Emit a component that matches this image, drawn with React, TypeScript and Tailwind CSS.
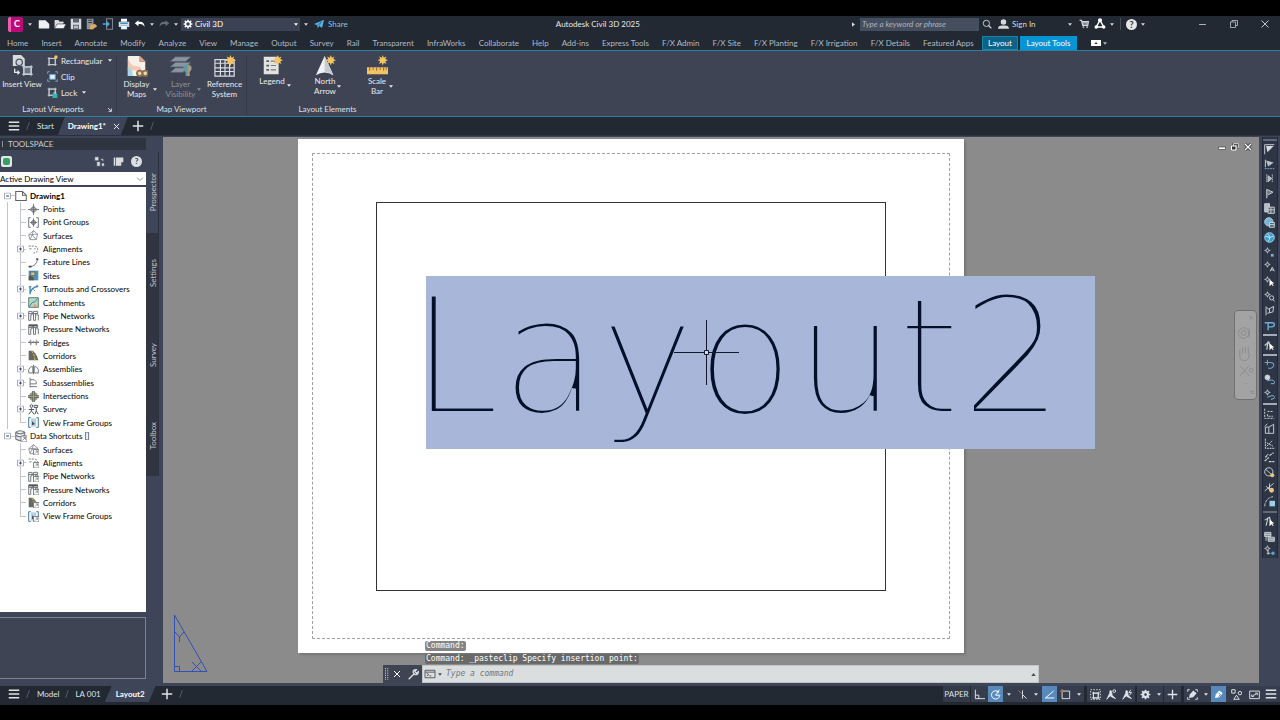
import type { ReactNode } from "react";

type IconProps = { children: ReactNode; className?: string; box?: string };

function Icon({ children, className = "size-3", box = "0 0 16 16" }: IconProps) {
  return (
    <svg viewBox={box} className={`shrink-0 ${className}`} fill="none" stroke="currentColor" strokeWidth="1.4" aria-hidden="true">
      {children}
    </svg>
  );
}

function Caret({ className = "w-2" }: { className?: string }) {
  return (
    <span className={`flex shrink-0 justify-center ${className}`} aria-hidden="true">
      <svg viewBox="0 0 6 4" className="h-[3px] w-1" fill="currentColor"><path d="M0 0h6L3 4z" /></svg>
    </span>
  );
}

function Burger() {
  return <Icon className="size-3"><path d="M1 3h14M1 8h14M1 13h14" strokeWidth="1.8" /></Icon>;
}

function Slash({ className = "ml-1.5" }: { className?: string }) {
  return <Icon box="0 0 6 12" className={`h-3 w-1 text-[#555d69] ${className}`}><path d="M1 12L5 0" /></Icon>;
}

const star = <path d="M18 0l1.2 3 3-1.3-1.3 3L24 6l-3.1 1.2 1.3 3-3-1.3L18 12l-1.2-3.1-3 1.3 1.3-3L12 6l3.1-1.3-1.3-3 3 1.3z" fill="#f5c563" stroke="none" />;

/* ---------- title bar ---------- */

const quickAccess = [
  { label: "New", icon: <path d="M1 3h9l5 5v6H1z" fill="#eef0f2" stroke="none" /> },
  { label: "Open", icon: <><path d="M1 14V3h5l1 2h6v2" fill="#c9ccd0" stroke="none" /><path d="M1 14V3h5l1 2h5v2H4z" fill="#dcdfe2" stroke="none" /><path d="M1 14l3-6h12l-3 6z" fill="#f2f3f4" stroke="#2a313c" strokeWidth=".7" /></> },
  { label: "Save", icon: <><path d="M1 1h14v14H1z" fill="#d7dade" stroke="none" /><path d="M4 1h8v5H4zM4 9h8v6H4z" fill="#59616c" stroke="none" /><path d="M5 11h6M5 13h6" stroke="#fff" strokeWidth="1" /></> },
  { label: "Save As", icon: <><path d="M1 1h9v14H1z" fill="#8d939b" stroke="none" /><path d="M3 3h5M3 6h5" stroke="#343c48" /><path d="M6 9l6-1 3 3-6 4H5z" fill="#e0aa62" stroke="none" /></> },
  { label: "Open from Web", icon: <><path d="M6 1h8v14H6z" stroke="#7d8691" /><path d="M1 8h8M6 5l3 3-3 3" stroke="#4aa9d6" strokeWidth="2" /></> },
  { label: "Plot", icon: <><path d="M4 1h8v4H4z" fill="#fff" stroke="none" /><path d="M1 5h14v7H1z" fill="#d9dde0" stroke="none" /><path d="M3 7h10" stroke="#388fca" strokeWidth="2" /><path d="M4 10h8v5H4z" fill="#fff" stroke="#48a0d4" strokeWidth=".7" /></> },
];

function TitleBar() {
  return (
    <header className="flex h-4 shrink-0 items-center bg-[#222932] text-[#d5d9de]">
      <button aria-label="Application menu" className="ml-2 h-[15px] w-[15px] shrink-0 rounded-xs border-l-[3px] border-[#f05cb0] bg-[#bd0a79] text-[9px] leading-3 font-bold text-white">C</button>
      <Caret className="w-[13px]" />
      {quickAccess.map((q) => (
        <button key={q.label} aria-label={q.label} className="flex w-4 shrink-0 justify-center"><Icon>{q.icon}</Icon></button>
      ))}
      <button aria-label="Undo" className="flex w-4 shrink-0 justify-center text-white"><Icon><path d="M6 3L1 7l5 4V8q6-1 8 4 0-8-8-7z" fill="currentColor" stroke="none" /></Icon></button>
      <Caret />
      <button aria-label="Redo" className="flex w-4 shrink-0 justify-center text-[#656c77]"><Icon><path d="M10 3l5 4-5 4V8Q4 7 2 12q0-8 8-7z" fill="currentColor" stroke="none" /></Icon></button>
      <Caret />
      <label className="relative ml-px flex h-[13px] w-[119px] shrink-0 items-center bg-[#3b4253] text-white">
        <span className="absolute left-0.5">
          <Icon className="size-[10px]"><path d="M8 1v14M1 8h14M3 3l10 10M13 3L3 13" strokeWidth="2.4" /><circle cx="8" cy="8" r="4" fill="#3b4253" strokeWidth="2.4" /></Icon>
        </span>
        <select aria-label="Workspace" className="h-full w-full appearance-none bg-transparent pl-[14px]"><option>Civil 3D</option></select>
        <span className="pointer-events-none absolute right-0"><Caret /></span>
      </label>
      <Caret className="w-3" />
      <button className="ml-0.5 flex shrink-0 items-center gap-1 text-[#7cc5e8]">
        <Icon className="size-[10px]"><path d="M0 8L16 1l-3 13-5-3-2 4-1-5z" fill="#5bb4e3" stroke="none" /><path d="M5 10l7-6-4 7" stroke="#24445c" strokeWidth=".8" /></Icon>
        Share
      </button>
      <h1 className="min-w-0 flex-1 pr-1 text-center text-[#e5e7ea]">Autodesk Civil 3D 2025</h1>
      <span className="flex w-2 shrink-0"><svg viewBox="0 0 4 6" className="h-[5px] w-[3px]" fill="currentColor"><path d="M0 0v6l4-3z" /></svg></span>
      <input aria-label="Search" placeholder="Type a keyword or phrase" className="h-[13px] w-[119px] shrink-0 bg-[#454e5f] px-0.5 italic placeholder:text-[#adb3bc]" />
      <button aria-label="Find" className="flex w-4 shrink-0 justify-center"><Icon className="size-[10px]"><circle cx="7" cy="7" r="5" /><path d="M10.500 10.500L15 15" strokeWidth="2" /></Icon></button>
      <button className="flex w-[71px] shrink-0 items-center gap-[3px] pl-[3px]">
        <Icon className="h-3 w-[11px]"><circle cx="8" cy="5" r="4" fill="currentColor" stroke="none" /><path d="M0 15q0-5 6-5h4q6 0 6 5z" fill="currentColor" stroke="none" /></Icon>
        Sign In
      </button>
      <Caret />
      <button aria-label="Store" className="ml-0.5 flex w-4 shrink-0 justify-center"><Icon className="size-[10px]"><path d="M1 2h3l2 8h8l1-6H5" strokeWidth="2" /><path d="M6 6h8M6 8h8" /><circle cx="7" cy="13" r="1" /><circle cx="13" cy="13" r="1" /></Icon></button>
      <button aria-label="Autodesk apps" className="flex w-4 shrink-0 justify-center text-white"><Icon><path d="M8 3L3 12h10z" strokeWidth="2" /><circle cx="8" cy="3" r="2" fill="currentColor" /><circle cx="3" cy="12" r="1.600" fill="currentColor" /><circle cx="13" cy="12" r="1.600" fill="currentColor" /></Icon></button>
      <Caret />
      <span className="ml-1 h-3 w-px bg-[#49505c]" />
      <button aria-label="Help" className="ml-[5px] size-[11px] shrink-0 rounded-full bg-[#e4e6e8] text-[9px] leading-[11px] font-bold text-[#29303a]">?</button>
      <Caret className="ml-0.5 w-2" />
      <button aria-label="Minimize" className="ml-10 flex w-[31px] shrink-0 justify-center"><Icon className="size-[9px]"><path d="M2 8h12" /></Icon></button>
      <button aria-label="Restore" className="flex w-[31px] shrink-0 justify-center"><Icon className="size-2"><path d="M1 4h10v11H1zM4 4V1h11v10h-4" /></Icon></button>
      <button aria-label="Close" className="flex w-[31px] shrink-0 justify-center"><Icon className="size-2"><path d="M1 1l14 14M15 1L1 15" strokeWidth="1.800" /></Icon></button>
    </header>
  );
}

/* ---------- ribbon ---------- */

const tabs = [
  "Home", "Insert", "Annotate", "Modify", "Analyze", "View", "Manage", "Output", "Survey", "Rail", "Transparent",
  "InfraWorks", "Collaborate", "Help", "Add-ins", "Express Tools", "F/X Admin", "F/X Site", "F/X Planting",
  "F/X Irrigation", "F/X Details", "Featured Apps",
];

function RibbonTabs() {
  return (
    <nav className="flex h-[18px] shrink-0 items-center bg-[#222932] pt-1 pl-[7px] text-[#b3b9c2]">
      <div className="flex w-[967px] shrink justify-between">
        {tabs.map((t) => <button key={t} className="whitespace-nowrap">{t}</button>)}
      </div>
      <button className="ml-2 h-[14px] w-9 shrink-0 border border-[#1784ab] bg-[#0d6286] leading-3 text-white">Layout</button>
      <button className="ml-0.5 h-[14px] w-[57px] shrink-0 bg-[#0794d5] leading-3 whitespace-nowrap text-white">Layout Tools</button>
      <button aria-label="Minimize ribbon" className="ml-[14px] flex h-1.5 w-[10px] items-center justify-center bg-white">
        <svg viewBox="0 0 6 4" className="h-0.5 w-1"><path d="M0 4h6L3 0z" fill="#222932" /></svg>
      </button>
      <Caret />
    </nav>
  );
}

const bigIcons = {
  insert: <><path d="M2 0h9l4 4v8H2z" fill="#d9dcde" stroke="none" /><circle cx="9" cy="8" r="3.500" stroke="#4b5564" fill="#cdd3d8" /><path d="M4 15v4h5M7 17l2 2-2 2" stroke="#e5e7ea" /><path d="M14 13h8v8h-8z" fill="#687589" stroke="#d9dcde" /><path d="M12 13h12M12 21h12M14 11v12M22 11v12" stroke="#c3c9d0" strokeWidth="1" /></>,
  maps: <><path d="M2 1h13l6 6v16H2z" fill="#f4f1ea" stroke="none" /><path d="M2 4q4 9 10 8 6 1 5 5H2z" fill="#f4c9b4" stroke="none" /><path d="M2 13q4 0 6 10H2z" fill="#a8d4e4" stroke="none" /><path d="M15 1v6h6" fill="#e4a98f" stroke="#bb6a5a" strokeWidth=".7" /><circle cx="15" cy="20" r="3" stroke="#8f6d48" strokeWidth="2" fill="#eed8a9" /><circle cx="21" cy="20" r="3" stroke="#8f6d48" strokeWidth="2" fill="#eed8a9" /></>,
  layers: <><path d="M6 2h17l-6 5H0zM6 8h17l-6 5H0zM6 14h14l-6 5H0z" fill="#8b95a0" stroke="#505a68" strokeWidth=".7" /><path d="M15 12q5-4 8 0 2 4-2 7v4h-4v-4q-4-3-2-7z" fill="#5f98a6" stroke="none" /><path d="M19 11v12q4 1 2-4 4-4 1-7z" fill="#aa9a75" stroke="none" /></>,
  grid: <path d="M1 5h21v18H1zM1 9h21M1 14h21M1 18h21M7 5v18M12 5v18M17 5v18" stroke="#d9dde2" strokeWidth="1.300" />,
  legend: <><path d="M2 2h17v20H2z" fill="#e3e3df" stroke="none" /><path d="M5 7h3M5 12h3M5 17h3" stroke="#555e68" strokeWidth="2" /><path d="M10 7h6M10 12h6M10 17h6" stroke="#747b83" /></>,
  north: <><path d="M11 1L1 23q10-6 20 0z" fill="#f1f2f3" stroke="none" /><path d="M11 1v18q6 1 10 4z" fill="#c4cbd2" stroke="none" /></>,
  scale: <><path d="M0 14h24v8H0z" fill="#f4c464" stroke="none" /><path d="M3 14v4M7 14v3M11 14v4M15 14v3M19 14v4M22 14v3" stroke="#795f34" strokeWidth="1" /></>,
};

type ToolProps = { icon: keyof typeof bigIcons; lines: string[]; width: string; starred?: boolean; caret?: boolean; dim?: boolean; tight?: boolean };

function Tool({ icon, lines, width, starred, caret, dim, tight }: ToolProps) {
  return (
    <button className={`relative flex flex-col items-center leading-[10px] ${width} ${dim ? "text-[#8b919c]" : "text-[#e8eaed]"}`}>
      <Icon box="0 0 24 24" className={tight ? "size-[21px]" : "mb-0.5 size-[22px]"}>{bigIcons[icon]}{starred && star}</Icon>
      {lines.map((l) => <span key={l} className="whitespace-nowrap">{l}</span>)}
      {caret && <span className={`absolute -right-px ${lines.length > 1 ? "bottom-2" : "-bottom-px"}`}><Caret className="w-[5px]" /></span>}
    </button>
  );
}

const viewportTools = [
  { label: "Rectangular", caret: true, icon: <><path d="M3 5h9v9H3zM1 5h13M1 14h13M3 3v13M12 3v13" stroke="#c5cbd2" /><circle cx="13" cy="3" r="2.500" fill="#f5c563" stroke="none" /></> },
  { label: "Clip", caret: false, icon: <><path d="M4 5h8v7H4z" fill="#e8edf2" stroke="#5da3d3" /><path d="M1 4V1h3M12 1h3v3M15 12v3h-3M4 15H1v-3" stroke="#74a8cc" /></> },
  { label: "Lock", caret: true, icon: <><path d="M3 3h9v9H3zM1 3h13M1 12h13M3 1v13M12 1v13" stroke="#c5cbd2" /><path d="M8 10h7v6H8z" fill="#37b4b0" stroke="none" /><path d="M10 10V8h3v2" stroke="#9cdbd8" /></> },
];

function Panel({ title, width, children, launcher }: { title: string; width: string; children: ReactNode; launcher?: boolean }) {
  return (
    <section className={`relative flex shrink-0 flex-col ${width}`}>
      <div className="flex flex-1 items-start">{children}</div>
      <h2 className={`h-3 text-center leading-3 text-[#dde0e4] ${launcher ? "pr-[10px]" : ""}`}>{title}</h2>
      {launcher && <button aria-label="Viewport settings" className="absolute right-1 bottom-[3px]"><Icon className="size-[5px] text-[#dde0e4]"><path d="M3 3l10 10M5 14h9V5" strokeWidth="3" /></Icon></button>}
    </section>
  );
}

function Ribbon() {
  return (
    <div className="flex h-[67px] shrink-0 border-y border-[#2b7f9f] bg-[#3e4454] pt-1 pb-px">
      <Panel title="Layout Viewports" width="w-[117px] border-r border-[#333a48]" launcher>
        <Tool icon="insert" lines={["Insert View"]} width="w-11" />
        <ul className="ml-[3px] text-[#e8eaed]">
          {viewportTools.map((t) => (
            <li key={t.label}>
              <button className="flex h-4 items-start gap-0.5"><Icon className="mr-px size-[11px]">{t.icon}</Icon>{t.label}{t.caret && <span className="mt-1"><Caret className="ml-0.5 w-1.5" /></span>}</button>
            </li>
          ))}
        </ul>
      </Panel>
      <Panel title="Map Viewport" width="w-[130px] border-r border-[#333a48]">
        <Tool icon="maps" lines={["Display", "Maps"]} width="w-[39px]" caret />
        <Tool icon="layers" lines={["Layer", "Visibility"]} width="ml-[5px] w-[39px]" caret dim />
        <Tool icon="grid" lines={["Reference", "System"]} width="ml-[5px] w-[39px]" starred />
      </Panel>
      <Panel title="Layout Elements" width="w-[161px]">
        <Tool icon="legend" lines={["Legend"]} width="ml-[7px] w-[36px]" starred caret tight />
        <Tool icon="north" lines={["North", "Arrow"]} width="ml-5 w-[30px]" starred caret tight />
        <Tool icon="scale" lines={["Scale", "Bar"]} width="ml-[22px] w-[30px]" starred caret tight />
      </Panel>
    </div>
  );
}

function DocumentTabs() {
  return (
    <nav className="flex h-[18px] shrink-0 items-center bg-[#222932] pl-2 text-[#dfe2e6]">
      <button aria-label="File tabs"><Burger /></button>
      <Slash />
      <button className="ml-[7px]">Start</button>
      <div className="ml-1 flex h-full w-[70px] items-center justify-between bg-[#3e4558] pr-2 pl-[10px] font-bold text-white [clip-path:polygon(7px_0,100%_0,calc(100%-7px)_100%,0_100%)]">
        <button>Drawing1*</button>
        <button aria-label="Close tab"><Icon className="size-[7px]"><path d="M2 2l12 12M14 2L2 14" strokeWidth="2" /></Icon></button>
      </div>
      <button aria-label="New drawing" className="ml-1"><Icon className="size-[12px]"><path d="M8 1v14M1 8h14" strokeWidth="2" /></Icon></button>
      <Slash className="ml-1.5" />
    </nav>
  );
}

/* ---------- toolspace ---------- */

const g = "#70757b";
const pipe = <path d="M1 2h5v5H4v8H1zM8 2h6v3h-3v10H8zM12 7h3v8M1 5h13" stroke={g} />;
const treeIcons: Record<string, ReactNode> = {
  Points: <><path d="M8 3l5 5-5 5-5-5z" fill="#a3a7ab" stroke={g} /><path d="M8 0v16M0 8h16" stroke={g} /></>,
  "Point Groups": <><path d="M8 4l4 4-4 4-4-4z" fill="#a3a7ab" stroke={g} /><path d="M8 2v12M3 8h10M4 1H1v14h3M12 1h3v14h-3" stroke={g} /></>,
  Surfaces: <path d="M8 1l6 5-2 8H3L1 7zM8 1L6 7l6 7M1 7l13-1M3 14l3-7" stroke={g} strokeWidth="1" />,
  Alignments: <path d="M1 3h7q6 0 6 5t-6 5M2 7h3M9 7h2" stroke={g} strokeDasharray="3 1.500" />,
  "Feature Lines": <><path d="M2 14q10 0 12-11" stroke={g} /><path d="M1 14h4M12 3h3" stroke="#41464c" strokeWidth="2.500" /></>,
  Sites: <><path d="M1 1h14v14H1z" fill="#4f90b3" stroke="none" /><path d="M1 9q7-1 8 6H1z" fill="#5d5648" stroke="none" /><path d="M4 3h6v5H4z" fill="#d6c58f" stroke="#4a4f55" strokeWidth=".8" /></>,
  "Turnouts and Crossovers": <><path d="M3 15V3M3 14q1-9 12-11" stroke="#3484b8" strokeWidth="1.800" /><path d="M1 4h4M8 8l2 2M13 1v4" stroke={g} /></>,
  Catchments: <><path d="M1 1h14v14H1z" fill="#b8d9c3" stroke="#5c7a73" /><path d="M2 14l4-6 4-1 4-5" stroke="#2e82ae" /><path d="M9 9l5 5H8z" fill="#db9e76" stroke="none" /></>,
  "Pipe Networks": pipe,
  "Pressure Networks": <>{pipe}<path d="M1 2h13" stroke="#50555b" strokeWidth="3" /></>,
  Bridges: <path d="M0 8h16M4 4v8M12 4v8M1 6q4 5 7 0 4 5 7 0" stroke={g} />,
  Corridors: <><path d="M1 1h6q6 5 8 14H1z" fill="#656960" stroke="none" /><path d="M5 1q5 6 5 14" stroke="#dfca4f" strokeDasharray="4 1.500" /></>,
  Assemblies: <path d="M8 1v14M1 8l3-4h3v9H1zM15 8l-3-4H9v9h6z" stroke={g} />,
  Subassemblies: <path d="M3 1v14M3 4h6l3 3v3H3M3 14h10" stroke={g} />,
  Intersections: <><circle cx="8" cy="8" r="6.500" fill="#949889" stroke="none" /><path d="M8 0v16M0 8h16" stroke="#6b6f62" strokeWidth="4" /><path d="M8 0v16M0 8h16" stroke="#b5b293" strokeWidth="1" /></>,
  Survey: <><circle cx="5" cy="3" r="2" stroke="#4b5056" /><path d="M5 6v4l-4 5M5 10l4 5M1 8h8M12 5v5l-2 5M12 10l3 5M9 2h5v3H9z" stroke="#4b5056" /></>,
  "View Frame Groups": <><path d="M4 1H1v14h3M12 1h3v14h-3" stroke="#3d7098" /><path d="M4 2h8v12H4z" fill="#b7cfe2" stroke="none" /><path d="M6 6l4 4-4 2z" fill="#34424f" stroke="none" /></>,
};

type Node = { label: string; root?: boolean; plus?: boolean; shortcut?: boolean; last?: boolean };

const nodes: Node[] = [
  { label: "Drawing1", root: true },
  { label: "Points" },
  { label: "Point Groups" },
  { label: "Surfaces" },
  { label: "Alignments", plus: true },
  { label: "Feature Lines" },
  { label: "Sites" },
  { label: "Turnouts and Crossovers", plus: true },
  { label: "Catchments" },
  { label: "Pipe Networks", plus: true },
  { label: "Pressure Networks" },
  { label: "Bridges" },
  { label: "Corridors" },
  { label: "Assemblies", plus: true },
  { label: "Subassemblies", plus: true },
  { label: "Intersections" },
  { label: "Survey", plus: true },
  { label: "View Frame Groups", last: true },
  { label: "Data Shortcuts []", root: true, shortcut: true },
  { label: "Surfaces", shortcut: true },
  { label: "Alignments", shortcut: true, plus: true },
  { label: "Pipe Networks", shortcut: true },
  { label: "Pressure Networks", shortcut: true },
  { label: "Corridors", shortcut: true },
  { label: "View Frame Groups", shortcut: true, last: true },
];

const linkBadge = <><path d="M8 8h8v8H8z" fill="#fff" stroke="#6d7278" strokeWidth="1.200" /><path d="M10 14l4-4M11 10h3v3" stroke="#6d7278" strokeWidth="1" /></>;

function Expander({ open }: { open?: boolean }) {
  return (
    <button aria-label={open ? "Collapse" : "Expand"} className="absolute top-1/2 -left-[3px] size-[7px] -translate-y-1/2 bg-white text-[#a4a9b5]">
      <svg viewBox="0 0 7 7" className="block size-[7px]" fill="none" stroke="currentColor"><path d="M.5.5h6v6h-6z" /><path d="M2 3.500h3" stroke="#3f4a78" />{!open && <path d="M3.500 2v3" stroke="#3f4a78" />}</svg>
    </button>
  );
}

function TreeRow({ node }: { node: Node }) {
  if (node.root) {
    return (
      <li className="flex flex-1 items-center">
        <span className="relative ml-[7px] flex w-2 items-center self-stretch"><span className="h-px w-full bg-[#c3c5ca]" /><Expander open /></span>
        {node.shortcut
          ? <Icon><path d="M1 3q6-4 12 0v9q-6 4-12 0zM1 3q6 4 12 0M1 7q6 4 12 0" stroke={g} fill="#e7e8e9" />{linkBadge}</Icon>
          : <Icon><path d="M1 2h9l5 5v7H1zM10 2v5h5" stroke="#5c6167" fill="#fff" /></Icon>}
        <span className={`ml-[3px] ${node.shortcut ? "" : "font-bold"}`}>{node.label}</span>
      </li>
    );
  }
  return (
    <li className="flex flex-1 items-center">
      <span className={`ml-[7px] w-[13px] self-stretch border-l ${node.shortcut ? "border-transparent" : "border-[#c3c5ca]"}`} />
      <span className="relative flex w-2 items-center self-stretch">
        <span className={`absolute top-0 left-0 w-px bg-[#c3c5ca] ${node.last ? "h-1/2" : "h-full"}`} />
        <span className="h-px w-[6px] bg-[#c3c5ca]" />
        {node.plus && <Expander />}
      </span>
      <Icon className="size-[11px]">{treeIcons[node.label]}{node.shortcut && linkBadge}</Icon>
      <span className="ml-1 whitespace-nowrap">{node.label}</span>
    </li>
  );
}

const sideTabs = [
  { label: "Prospector", tone: "bg-[#3e4558]" },
  { label: "Settings", tone: "bg-[#303541]" },
  { label: "Survey", tone: "bg-[#303541]" },
  { label: "Toolbox", tone: "bg-[#303541]" },
];

function Toolspace() {
  return (
    <aside className="flex w-[163px] shrink-0 bg-[#3e4558] pt-0.5">
      <div className="flex w-[146px] flex-col">
        <h2 className="flex h-3 items-center bg-[#2e3440] pl-0.5 text-[#c9cdd3]"><span className="mr-[5px] h-1.5 w-px bg-[#8e949e]" />TOOLSPACE</h2>
        <div className="flex h-[22px] items-center text-[#d8dbdf]">
          <button aria-label="Item view" className="mr-auto ml-px flex size-[11px] items-center justify-center rounded-xs bg-[#dfe9e2]"><span className="size-[7px] rounded-xs bg-[#35a168]" /></button>
          <button aria-label="Panorama"><Icon className="size-[11px]"><path d="M1 1h6v6H1zM9 4h5v4M4 8h5v7H4zM11 10h4v5h-4z" fill="currentColor" strokeWidth="1" stroke="#3e4558" /></Icon></button>
          <button aria-label="Preview" className="ml-2"><Icon className="size-[11px]"><path d="M1 2h2v12H1zM4 2h11v7h-3v5H4z" fill="currentColor" stroke="none" /></Icon></button>
          <button aria-label="Toolspace help" className="mr-1 ml-[7px] size-[11px] rounded-full bg-[#dcdfe2] text-[8px] leading-[11px] font-bold text-[#353b48]">?</button>
        </div>
        <label className="relative flex h-[13px] items-center bg-white text-black">
          <select aria-label="Drawing view" className="h-full w-full appearance-none"><option>Active Drawing View</option></select>
          <span className="pointer-events-none absolute right-0.5"><Icon className="size-2 text-[#5d6370]"><path d="M2 5l6 6 6-6" /></Icon></span>
        </label>
        <div className="mt-0.5 flex-1 bg-white pt-0.5 text-black">
          <ul className="flex h-[334px] flex-col">
            {nodes.map((n, i) => <TreeRow key={i} node={n} />)}
          </ul>
        </div>
        <div className="mt-[5px] mb-[7px] h-[62px] border border-l-0 border-[#7b818e] bg-[#3e4454]" />
      </div>
      <div className="flex w-[13px] flex-col pt-[14px]">
        {sideTabs.map((t) => (
          <button key={t.label} className={`flex h-[81px] w-full items-center justify-center border-r border-[#2c323d] pl-0.5 text-[#bfc4cc] ${t.tone}`}>
            <span className="rotate-180 [writing-mode:vertical-rl]">{t.label}</span>
          </button>
        ))}
      </div>
    </aside>
  );
}

/* ---------- drawing area ---------- */

function CommandLine() {
  return (
    <div className="absolute bottom-0 left-[220px] w-[656px] font-['DejaVu_Sans_Mono',monospace] text-[8px]">
      <div className="flex flex-col items-start gap-[3px] pb-px pl-[42px] leading-[10px] text-white">
        <span className="rounded-xs bg-[#858585] px-px">Command:</span>
        <span className="rounded-xs bg-[#696969] px-px">Command: _pasteclip Specify insertion point:</span>
      </div>
      <div className="flex h-[18px] items-center bg-[#3f4453]">
        <Icon box="0 0 8 16" className="ml-px h-3 w-1.5 text-[#b6bbc3]"><path d="M2 0v16M5 0v16" strokeDasharray="1.500 1.500" /></Icon>
        <button aria-label="Close command line" className="flex w-[14px] justify-center text-white"><Icon className="size-2"><path d="M2 2l12 12M14 2L2 14" strokeWidth="2" /></Icon></button>
        <button aria-label="Customize" className="flex w-[18px] justify-center text-[#d5d8dd]"><Icon className="size-[11px]"><path d="M1 15l8-8M15 4l-3 2-2-2 2-3q-6 0-4 5l2 2q5 1 5-4z" strokeWidth="2" /></Icon></button>
        <label className="flex h-full flex-1 items-center border border-[#c3c6c8] bg-[#dbdedf] pl-px text-[#4a4f55]">
          <Icon className="h-[10px] w-3"><path d="M0 2h16v12H0zM0 5h16M3 7l3 2-3 2M7 11h3" /></Icon>
          <Caret />
          <input aria-label="Command" placeholder="Type a command" className="min-w-0 flex-1 bg-transparent pl-0.5 italic placeholder:text-[#73787d]" />
          <button aria-label="Command history" className="mr-0.5"><svg viewBox="0 0 6 4" className="h-[3px] w-[5px]" fill="currentColor"><path d="M0 4h6L3 0z" /></svg></button>
        </label>
      </div>
    </div>
  );
}

function Canvas() {
  return (
    <main className="relative mt-px mb-[3px] min-w-0 flex-1 overflow-hidden bg-[#8b8b8b]">
      {/* sheet with its printable margin and one viewport */}
      <div className="absolute top-0.5 left-[135px] h-[514px] w-[666px] bg-white shadow-[2px_2px_2px_#777]">
        <div className="absolute top-[14px] left-[14px] h-[486px] w-[638px] border border-dashed border-[#a0a0a0]" />
        <div className="absolute top-[63px] left-[78px] h-[389px] w-[510px] border border-[#333]" />
      </div>

      {/* selected text, its strokes thinned by an outline in the highlight colour */}
      <div className="absolute top-[139px] left-[263px] flex h-[173px] w-[669px] items-center bg-[#a7b6d9] text-[#04102a]">
        <span className="-mt-3 -ml-4 font-['DejaVu_Sans',sans-serif] text-[162px] leading-none font-extralight [-webkit-text-stroke:4px_#a7b6d9]">Layout2</span>
      </div>

      {/* crosshair */}
      <svg viewBox="0 0 66 66" className="absolute top-[183px] left-[511px] size-[66px]" fill="none" stroke="#14192c">
        <path d="M32.500 0v30M32.500 35v30M0 32.500h30M35 32.500h30" /><path d="M30.500 30.500h4v4h-4z" fill="#d5dcee" />
      </svg>

      {/* UCS triangle */}
      <svg viewBox="0 0 36 60" className="absolute bottom-[10px] left-[10px] h-[60px] w-9" fill="none" stroke="#3550b4">
        <path d="M1.500 2v56.500H34zM1.500 53.500h5v5M2 19l4.500 5L11 19M6.500 24v5M19 49l9 9M28 49l-9 9" />
      </svg>

      <div className="absolute top-1.5 right-[7px] flex items-center gap-[5px] text-white">
        <button aria-label="Minimize drawing"><Icon className="size-[8px]"><path d="M1 8h14v5H1z" fill="#fff" stroke="#444" /></Icon></button>
        <button aria-label="Restore drawing"><Icon className="size-[8px]"><path d="M5 1h10v9H5z" stroke="#333" strokeWidth="4" /><path d="M5 1h10v9H5z" /><path d="M1 6h9v8H1z" fill="#333" strokeWidth="2" /></Icon></button>
        <button aria-label="Close drawing"><Icon className="size-[8px]"><path d="M2 2l12 12M14 2L2 14" stroke="#333" strokeWidth="6" /><path d="M2 2l12 12M14 2L2 14" strokeWidth="2.500" /></Icon></button>
      </div>

      {/* navigation bar */}
      <div className="absolute top-[173px] right-[2px] h-[90px] w-[23px] rounded-sm border border-[#6f6f6f] bg-[#a3a3a3] text-[#8c8c8c]">
        <svg viewBox="0 0 22 88" className="size-full" fill="none" stroke="currentColor">
          <path d="M15 3l4 4M19 3l-4 4M16 84h4M16 82h4" /><circle cx="9" cy="21" r="5.500" /><circle cx="9" cy="21" r="2.500" /><path d="M15 16v10M5 44q0 6 5 6t5-8M5 44v-6M8 42v-6M11 42v-6M14 42v-6M5 55l10 11M15 55L5 66" /><circle cx="17" cy="60" r="2" /><path d="M11 74h2" />
        </svg>
      </div>

      <CommandLine />
    </main>
  );
}

/* ---------- right tool strip ---------- */

const node = <path d="M5 1l1 3 3 1-3 1-1 3-1-3-3-1 3-1z" strokeWidth="1.200" />;
const cursor = <path d="M8 5v10l3-3 2 3 1-1-2-3h3z" fill="#fff" stroke="none" />;
const stripGroups: ReactNode[][] = [
  [
    <><path d="M1 15V1h14" /><path d="M3 3h11L5 12z" fill="#d5dade" stroke="none" /></>,
    <><path d="M2 1v11" /><path d="M3 2l11 3-8 6z" fill="#b9c1c8" stroke="none" /><path d="M1 14h14" stroke="#69a9cf" strokeDasharray="3 1" /></>,
    <><path d="M4 2v12M12 2v12" strokeDasharray="2 1" /><path d="M6 4l5 4-5 5z" fill="#aab6c0" /></>,
    <path d="M4 15V2l9 4-7 4" fill="#6c7885" />,
    <><path d="M1 1h7v12H1z" fill="#b6bdc4" /><path d="M6 6h9v9H6zM6 10h9M10 6v9" fill="#4a5563" /></>,
    <><circle cx="7" cy="7" r="6" fill="#72b6dc" /><path d="M8 8h7v7H8zM8 11h7" fill="#49677f" /></>,
    <><circle cx="8" cy="8" r="7" fill="#3e9ccd" stroke="#9bd0ea" /><path d="M2 6q6 4 12 0M5 2q6 6 1 12" stroke="#c8e6f4" /></>,
    <>{node}<path d="M10 10h4v4h-4z" fill="#78afd3" stroke="none" /></>,
    <>{node}<path d="M9 15l3-6 3 6M10 13h4" /></>,
    <>{node}{cursor}</>,
    <>{node}<circle cx="11" cy="10" r="3" /><path d="M13 12l2 3" /></>,
    <path d="M3 2v13M4 4l3 2 7-4-1 8-8 2M8 5v6" />,
    <path d="M1 4h11q3 0 3 3t-4 3H6M6 4v11" stroke="#6eaed4" strokeWidth="2" />,
  ],
  [<><path d="M1 8l6-5 3 8M6 2l-2 12" strokeWidth="1.800" />{cursor}</>],
  [
    <path d="M1 5h7M5 1v8M8 5q7 0 6 5-2 5-8 3" stroke="#739fca" strokeWidth="1.600" />,
    <><circle cx="5" cy="5" r="3.500" fill="#ced3d8" /><path d="M5 10q8-3 10 1t-5 3" stroke="#86b8d7" /></>,
    <>{node}<path d="M5 12q8-4 10-1t-5 4" stroke="#86b8d7" /></>,
  ],
  [
    <path d="M1 1v14h14M5 5h8M5 9v3h8" strokeDasharray="3 1.500" />,
    <path d="M2 6v9h5V6zM7 6l7-4v13H7M1 5l4-4" />,
    <path d="M2 1v14h13M4 12l8-8M4 7l9 5" strokeDasharray="3 1" />,
    <path d="M1 13l6-5M8 5l6-4M7 14h8M2 8l4-5" strokeDasharray="4 1" strokeWidth="1.800" />,
    <><circle cx="7" cy="7" r="6" /><path d="M2 3l9 8" /><circle cx="12" cy="12" r="3" fill="#e5c87d" stroke="none" /></>,
    <><path d="M1 13L14 2M3 6l8 8M8 2v9" /><circle cx="11" cy="12" r="3.500" fill="#e5c87d" stroke="none" /></>,
    <><path d="M1 15Q2 3 13 1" strokeDasharray="4 1.500" /><path d="M8 7h8v8H8z" fill="#9ad0e9" stroke="none" /></>,
  ],
  [
    <><path d="M1 6l7-4 3 9M6 2l-3 12" strokeWidth="1.600" />{cursor}</>,
    <path d="M1 2h9v6H1zM1 5h9M6 9h9v6H6zM3 8v6M6 12h9" fill="#87919b" />,
    <>{node}<path d="M6 7v7M4 12h5" /><circle cx="13" cy="12" r="2.500" fill="#57a5d8" stroke="none" /></>,
  ],
];

function ToolStrip() {
  return (
    <aside className="flex w-[21px] shrink-0 justify-center bg-[#3e4558] pt-px">
      <div className="flex h-[421px] w-4 flex-col border-x border-[#222935] bg-[#2e3645] text-[#c8cfd6]">
        {stripGroups.map((group, gi) => (
          <div key={gi} className="contents">
            <span className="flex h-[5px] shrink-0 items-center"><span className={`h-0.5 w-full ${gi === 0 || gi === 4 ? "bg-[#606b79]" : "bg-[#a3adb7]"}`} /></span>
            {group.map((icon, i) => (
              <button key={i} aria-label={`Tool ${gi + 1}-${i + 1}`} className="flex min-h-0 flex-1 items-center justify-center"><Icon className="size-[11px]">{icon}</Icon></button>
            ))}
          </div>
        ))}
      </div>
    </aside>
  );
}

/* ---------- status bar ---------- */

const person = <path d="M6 2l2 1 1 6 5 5-5-2-3-2-5 5 4-8z" fill="currentColor" stroke="currentColor" strokeWidth="1" />;
const pen = <path d="M3 13l1-5 5-6 5 4-5 6z" fill="currentColor" stroke="none" />;
const statusItems: { label: string; width: string; icon: ReactNode; caret?: string; on?: boolean }[] = [
  { label: "Ortho", width: "ml-px w-[17px]", icon: <path d="M2 1v13h14M2 9h5v5" /> },
  { label: "Polar", width: "w-[15px]", on: true, caret: "w-3", icon: <><path d="M13 5a6 6 0 1 0 1 5M8 9h7M8 9l5-6" /><path d="M10 5l4-4" /></> },
  { label: "Isometric", width: "w-[14px]", caret: "w-[13px]", icon: <><path d="M8 2v12M8 8l6 6" /><path d="M2 2l6 6" stroke="#bd6670" /></> },
  { label: "Object snap tracking", width: "w-[15px]", on: true, icon: <path d="M14 3L2 13h13" /> },
  { label: "Object snap", width: "w-[17px]", caret: "w-[10px]", icon: <><path d="M4 3h10v11H3V5" /><circle cx="3" cy="3" r="1.800" stroke="#df8a68" /></> },
  { label: "Viewport lock", width: "ml-[3px] w-4", icon: <><path d="M1 1h14v14H1z" strokeDasharray="2 2" /><path d="M5 6h7v7H5zM3 6h11M3 13h11M5 4v11M12 4v11" /></> },
  { label: "Annotation visibility", width: "w-4", icon: <>{person}<circle cx="12" cy="3" r="2" /></> },
  { label: "Add scales", width: "w-4", icon: <>{person}<path d="M13 1l-3 4h4l-3 4" /></> },
  { label: "Workspace switching", width: "ml-0.5 w-[17px]", caret: "w-[9px]", icon: <><path d="M8 1v14M1 8h14M3 3l10 10M13 3L3 13" strokeWidth="2.500" /><circle cx="8" cy="8" r="3.500" fill="#3a4150" strokeWidth="3" /></> },
  { label: "Annotation monitor", width: "ml-px w-[17px]", icon: <path d="M8 1v14M1 8h14" strokeWidth="2" /> },
  { label: "Isolate objects", width: "ml-[3px] w-[17px]", caret: "w-[10px]", icon: <><path d="M1 4V1h3M12 1h3v3M15 12v3h-3M4 15H1v-3" />{pen}</> },
  { label: "Hardware acceleration", width: "w-[15px]", on: true, icon: <>{pen}<path d="M8 6l3 2-3 3" stroke="#5889bd" /></> },
  { label: "Quick properties", width: "w-5", icon: <><path d="M1 1h5v5H1zM8 9l4 6H4z" /><circle cx="13" cy="6" r="2.500" /></> },
  { label: "Clean screen", width: "w-4", icon: <path d="M1 3h14v11H1zM4 8v3h3M12 9V6H9M5 10l6-3" /> },
];

function StatusBar() {
  return (
    <footer className="flex h-[19px] shrink-0 items-center bg-[#222932] pb-[3px] pl-2 text-[#dfe2e6]">
      <button aria-label="Layout list"><Burger /></button>
      <Slash />
      <button className="ml-[7px]">Model</button>
      <Slash />
      <button className="ml-1.5">LA 001</button>
      <button className="ml-1 h-full w-[51px] bg-[#3e4558] font-bold text-white [clip-path:polygon(7px_0,100%_0,calc(100%-7px)_100%,0_100%)]">Layout2</button>
      <button aria-label="New layout" className="ml-[5px]"><Icon className="size-[12px]"><path d="M8 1v14M1 8h14" strokeWidth="2" /></Icon></button>
      <Slash />
      <button className="ml-auto h-4 w-[27px] bg-[#323947] whitespace-nowrap">PAPER</button>
      {statusItems.map((s) => (
        <div key={s.label} className="flex h-4 shrink-0 items-center">
          <button aria-label={s.label} className={`flex h-full items-center justify-center ${s.width} ${s.on ? "bg-[#5889bd] text-white" : "bg-[#363d4c]"}`}>
            <Icon className="size-[11px]">{s.icon}</Icon>
          </button>
          {s.caret && <span className="flex h-full items-center bg-[#363d4c]"><Caret className={s.caret} /></span>}
        </div>
      ))}
      <button aria-label="Customization" className="flex h-4 w-[18px] shrink-0 items-center justify-center bg-[#363d4c]"><Burger /></button>
    </footer>
  );
}

export default function App() {
  return (
    <div className="flex h-screen min-h-[600px] flex-col overflow-hidden bg-black pt-4 pb-[15px] font-['Lato',sans-serif] text-[8px] leading-3">
      <TitleBar />
      <RibbonTabs />
      <Ribbon />
      <DocumentTabs />
      <div className="flex min-h-0 flex-1 border-t border-[#2b313d] bg-[#3e4558]">
        <Toolspace />
        <Canvas />
        <ToolStrip />
      </div>
      <StatusBar />
    </div>
  );
}
